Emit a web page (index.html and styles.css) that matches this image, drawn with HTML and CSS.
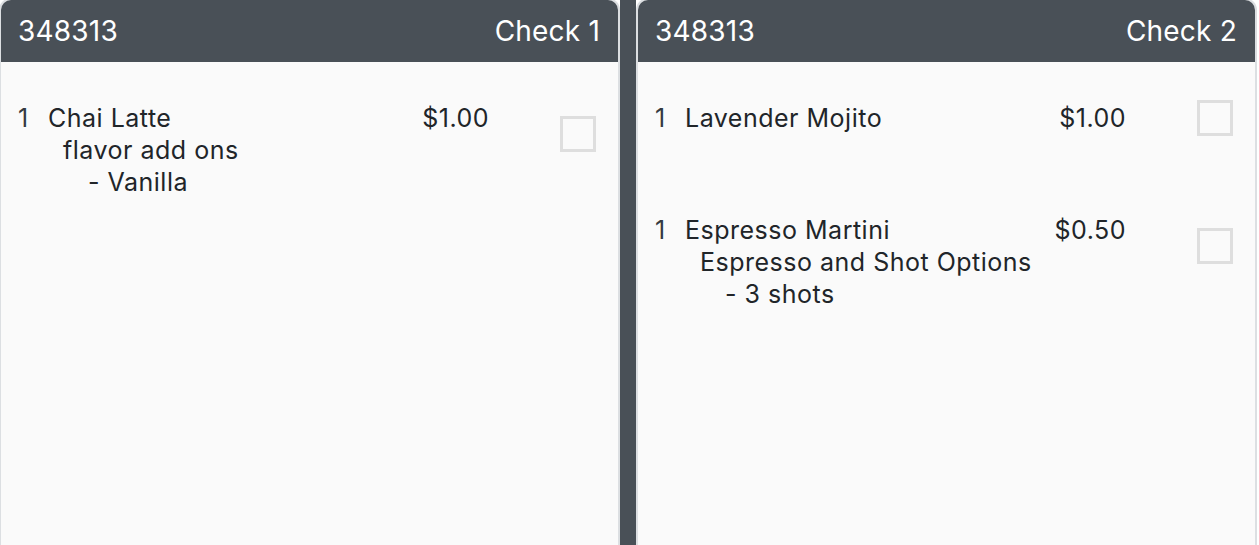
FILE: index.html
```html
<!DOCTYPE html>
<html lang="en">
<head>
<meta charset="utf-8">
<title>Checks</title>
<link rel="stylesheet" href="styles.css">
</head>
<body>
<div class="board">
  <section class="check">
    <header class="check-head">
      <span class="check-id">348313</span>
      <span class="check-name">Check 1</span>
    </header>
    <div class="check-body">
      <div class="item">
        <div class="item-row">
          <div class="item-main">
            <div class="item-line">
              <span class="qty">1</span>
              <span class="name">Chai Latte</span>
              <span class="price">$1.00</span>
            </div>
            <div class="mod-group">flavor add ons</div>
          </div>
          <span class="box"></span>
        </div>
        <div class="mod-option">- Vanilla</div>
      </div>
    </div>
  </section>
  <div class="divider"></div>
  <section class="check">
    <header class="check-head">
      <span class="check-id">348313</span>
      <span class="check-name">Check 2</span>
    </header>
    <div class="check-body">
      <div class="item">
        <div class="item-row">
          <div class="item-main">
            <div class="item-line">
              <span class="qty">1</span>
              <span class="name">Lavender Mojito</span>
              <span class="price">$1.00</span>
            </div>
          </div>
          <span class="box"></span>
        </div>
      </div>
      <div class="item">
        <div class="item-row">
          <div class="item-main">
            <div class="item-line">
              <span class="qty">1</span>
              <span class="name">Espresso Martini</span>
              <span class="price">$0.50</span>
            </div>
            <div class="mod-group">Espresso and Shot Options</div>
          </div>
          <span class="box"></span>
        </div>
        <div class="mod-option">- 3 shots</div>
      </div>
    </div>
  </section>
</div>
</body>
</html>
```
FILE: styles.css
```css
html, body {
  margin: 0;
  padding: 0;
  background: #ffffff;
  overflow: hidden;
}
body {
  font-family: Inter, "Noto Sans", "Liberation Sans", sans-serif;
  color: #212529;
}
.board {
  display: flex;
  margin: -2px 0 0 -1px;
  height: 560px;
}
.check {
  width: 621px;
  flex: none;
  box-sizing: border-box;
  border: 2px solid #dcdfe2;
  border-radius: 12px;
  background: #fafafa;
  overflow: hidden;
  height: 560px;
}
.divider {
  width: 16px;
  flex: none;
  background: #495057;
}
.check-head {
  height: 62px;
  background: #495057;
  color: #ffffff;
  display: flex;
  align-items: center;
  justify-content: space-between;
  padding: 0 18px 0 17px;
  font-size: 28px;
  letter-spacing: 0.2px;
  line-height: 32px;
}
.check-body {
  padding: 0 22px 0 17px;
  display: flex;
  flex-direction: column;
}
.item {
  padding: 40px 0;
  font-size: 25px;
  letter-spacing: 0.5px;
  line-height: 32px;
}
.item-row {
  display: flex;
  align-items: center;
}
.item-main {
  width: 471px;
  flex: none;
}
.item-line {
  display: flex;
}
.qty {
  width: 30px;
  flex: none;
  color: #343a40;
}
.name {
  flex: 1;
}
.price {
  flex: none;
}
.mod-group {
  padding-left: 45px;
}
.mod-option {
  padding-left: 70px;
}
.box {
  flex: none;
  width: 36px;
  height: 36px;
  margin: -2px 0 -2px 71px;
  box-sizing: border-box;
  border: 3px solid #dedede;
  background: #fafafa;
}
```
